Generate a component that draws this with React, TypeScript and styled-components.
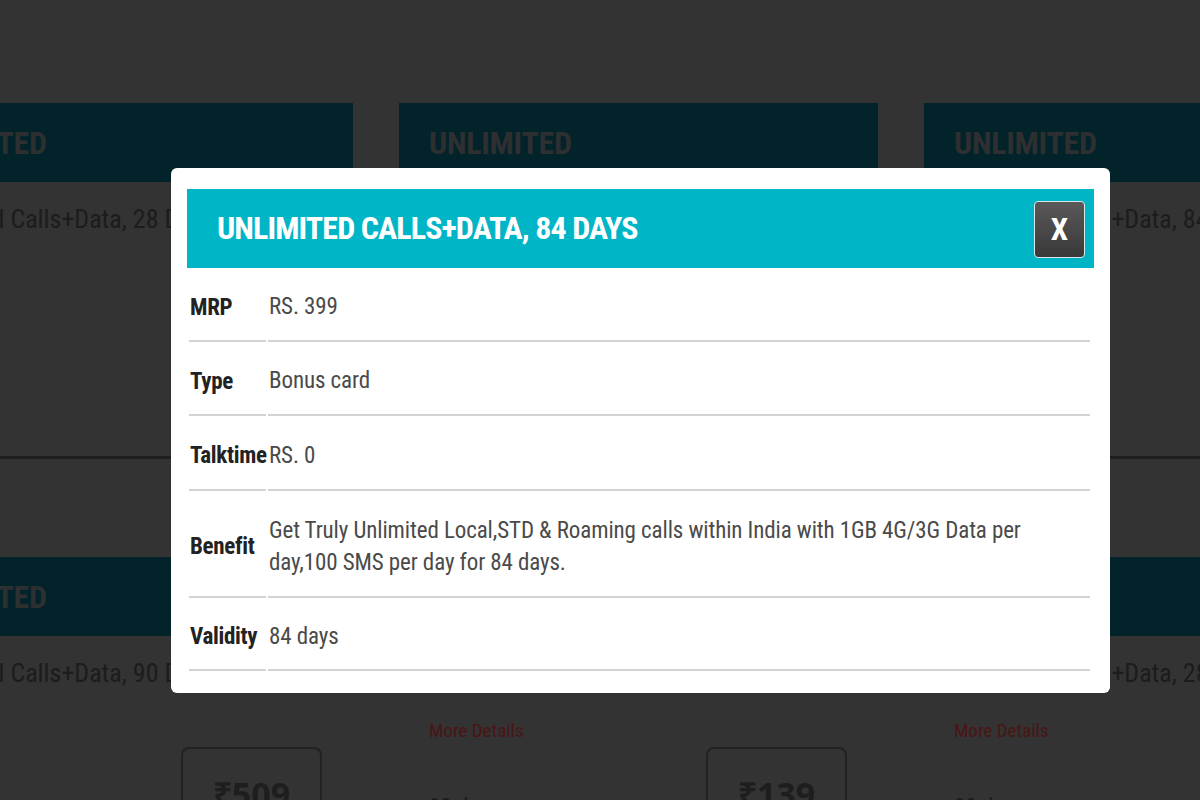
import React from "react";
import styled, { createGlobalStyle } from "styled-components";

const FONT = `"Roboto Condensed", "DejaVu Sans Condensed", "Liberation Sans", sans-serif`;

const GlobalStyle = createGlobalStyle`
  html, body {
    margin: 0;
    padding: 0;
    background: #333333;
    overflow: hidden;
  }
  body {
    font-family: ${FONT};
  }
  * { box-sizing: border-box; }
`;

const Page = styled.div`
  position: relative;
  width: 1200px;
  height: 800px;
  overflow: hidden;
  background: #333333;
`;

const CardsGrid = styled.div`
  display: grid;
  grid-template-columns: repeat(3, 479px);
  column-gap: 46px;
  row-gap: 98px;
  margin-left: -126px;
  padding-top: 103px;
`;

const Card = styled.div`
  height: 356px;
  border-bottom: 3px solid #1e1e1e;
  display: flex;
  flex-direction: column;
`;

const CardHeader = styled.div`
  height: 79px;
  background: #02232a;
  padding-left: 30px;
  display: flex;
  align-items: center;
  font-family: ${FONT};
  font-weight: 700;
  font-size: 32px;
  letter-spacing: -0.3px;
  color: #2d2f30;
`;

const CardDesc = styled.div`
  padding: 22px 0 0 33px;
  font-size: 26px;
  line-height: 30px;
  color: #1c1c1c;
  white-space: nowrap;
`;

const CardFooter = styled.div`
  display: grid;
  grid-template-columns: 307px 141px;
  margin-top: 26px;
`;

const FooterLeft = styled.div`
  display: flex;
  flex-direction: column;
  padding-left: 30px;
`;

const MoreLink = styled.span`
  margin-top: 6px;
  font-size: 19px;
  line-height: 22px;
  color: #4a1515;
`;

const Days = styled.span`
  margin-top: 52px;
  font-size: 23px;
  color: #1c1c1c;
`;

const PriceBox = styled.div`
  margin-top: 33px;
  height: 90px;
  border: 2px solid #222;
  border-radius: 8px;
  display: flex;
  justify-content: center;
  padding-top: 22px;
  font-family: "Open Sans", "Liberation Sans", sans-serif;
  font-weight: 700;
  font-size: 34px;
  color: #1e1e1e;
`;

const Modal = styled.div`
  position: absolute;
  left: 171px;
  top: 168px;
  width: 939px;
  height: 525px;
  background: #ffffff;
  border-radius: 6px;
  padding: 21px 16px 0 16px;
  font-family: ${FONT};
`;

const ModalHeader = styled.div`
  height: 79px;
  background: #00b5c6;
  display: flex;
  align-items: center;
  justify-content: space-between;
  padding: 0 9px 0 30px;
`;

const ModalTitle = styled.h2`
  margin: 0 0 2px 0;
  font-size: 32px;
  font-weight: 700;
  letter-spacing: -0.9px;
  color: #ffffff;
`;

const CloseButton = styled.button`
  width: 51px;
  height: 57px;
  border: 1px solid #d8e8ea;
  border-radius: 4px;
  background: linear-gradient(#5a5858, #3a3939);
  color: #ffffff;
  font-family: ${FONT};
  font-weight: 700;
  font-size: 31px;
  display: flex;
  align-items: center;
  justify-content: center;
  padding: 0;
  margin-top: 1px;
`;

const Table = styled.table`
  width: 905px;
  border-collapse: separate;
  border-spacing: 2px 0;
  table-layout: fixed;
`;

const Row = styled.tr<{ $h: number }>`
  height: ${(p) => p.$h}px;
`;

const Label = styled.td`
  width: 77px;
  padding: 6px 0 0 1px;
  border-bottom: 2px solid #d2d2d2;
  font-size: 23px;
  font-weight: 700;
  color: #222;
  vertical-align: middle;
  white-space: nowrap;
  letter-spacing: -0.3px;
`;

const Value = styled.td`
  padding: 6px 0 0 1px;
  border-bottom: 2px solid #d2d2d2;
  font-size: 23px;
  line-height: 32px;
  color: #4a4a4a;
  vertical-align: middle;
  letter-spacing: -0.1px;
`;

type CardData = { title: string; desc: string; price: string; days: string };

const row1: CardData[] = [
  { title: "UNLIMITED", desc: "Unlimited Calls+Data, 28 Days", price: "₹199", days: "28 days" },
  { title: "UNLIMITED", desc: "Unlimited Calls+Data, 84 Days", price: "₹399", days: "84 days" },
  { title: "UNLIMITED", desc: "Unlimited Calls+Data, 84 Days", price: "₹459", days: "84 days" },
];
const row2: CardData[] = [
  { title: "UNLIMITED", desc: "Unlimited Calls+Data, 90 Days", price: "₹509", days: "90 days" },
  { title: "UNLIMITED", desc: "Unlimited Calls+Data, 28 Days", price: "₹139", days: "30 days" },
  { title: "UNLIMITED", desc: "Unlimited Calls+Data, 28 Days", price: "₹169", days: "30 days" },
];

const PlanCard = ({ d }: { d: CardData }) => (
  <Card>
    <CardHeader>{d.title}</CardHeader>
    <CardDesc>{d.desc}</CardDesc>
    <CardFooter>
      <FooterLeft>
        <MoreLink>More Details</MoreLink>
        <Days>{d.days}</Days>
      </FooterLeft>
      <PriceBox>{d.price}</PriceBox>
    </CardFooter>
  </Card>
);

const rows: { label: string; value: React.ReactNode; h: number }[] = [
  { label: "MRP", value: "RS. 399", h: 74 },
  { label: "Type", value: "Bonus card", h: 74 },
  { label: "Talktime", value: "RS. 0", h: 75 },
  {
    label: "Benefit",
    value:
      "Get Truly Unlimited Local,STD & Roaming calls within India with 1GB 4G/3G Data per day,100 SMS per day for 84 days.",
    h: 107,
  },
  { label: "Validity", value: "84 days", h: 73 },
];

export default function App() {
  return (
    <Page>
      <GlobalStyle />
      <CardsGrid>
        {[...row1, ...row2].map((d, i) => (
          <PlanCard key={i} d={d} />
        ))}
      </CardsGrid>
      <Modal>
        <ModalHeader>
          <ModalTitle>UNLIMITED CALLS+DATA, 84 DAYS</ModalTitle>
          <CloseButton>X</CloseButton>
        </ModalHeader>
        <Table>
          <tbody>
            {rows.map((r) => (
              <Row key={r.label} $h={r.h}>
                <Label>{r.label}</Label>
                <Value>{r.value}</Value>
              </Row>
            ))}
          </tbody>
        </Table>
      </Modal>
    </Page>
  );
}
